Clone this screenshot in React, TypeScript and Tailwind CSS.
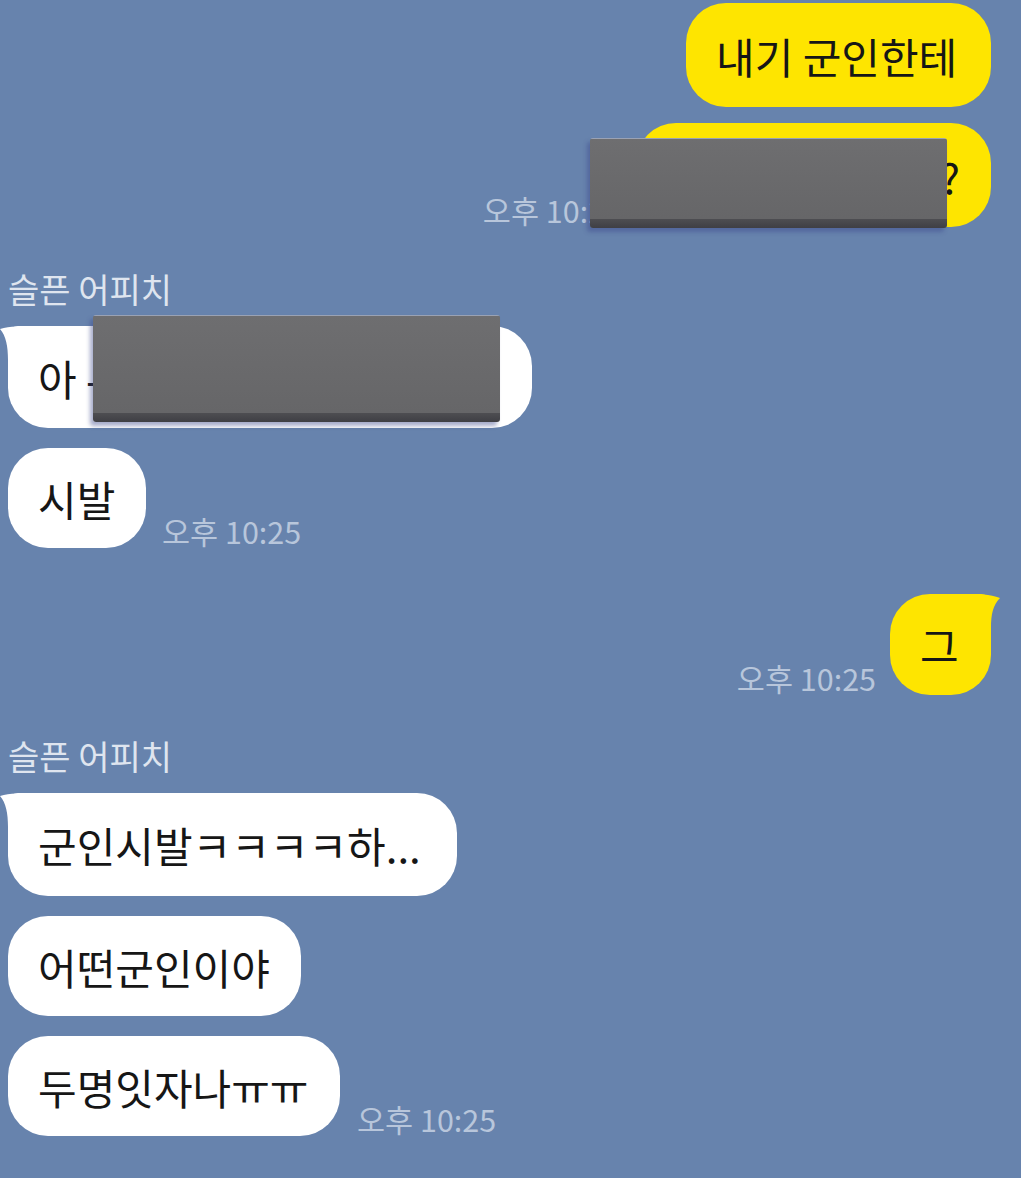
import React from "react";

const FONT = { fontFamily: '"Noto Sans CJK KR", "Noto Sans", sans-serif' };

function Time({ children }: { children: React.ReactNode }) {
  return (
    <span className="text-[30.5px] leading-[34px] text-[#b8c6db] whitespace-nowrap">
      {children}
    </span>
  );
}

function TailLeft() {
  return (
    <svg className="absolute left-[-8px] top-0" width="34" height="34" viewBox="0 0 34 34">
      <path d="M0 3 C 10 0 22 0 34 0 L34 34 L8 34 C 8 20 6 10 0 3 Z" fill="#ffffff" />
    </svg>
  );
}

function TailRight() {
  return (
    <svg className="absolute right-[-9px] top-0" width="34" height="34" viewBox="0 0 34 34">
      <path d="M34 4 C 24 0 12 0 0 0 L0 34 L25 34 C 25 20 27 11 34 4 Z" fill="#fee500" />
    </svg>
  );
}

function Bubble({
  text,
  w,
  h = 101,
  mine = false,
  tail = false,
  end = false,
}: {
  text: string;
  w: number;
  h?: number;
  mine?: boolean;
  tail?: boolean;
  end?: boolean;
}) {
  return (
    <div
      className={
        "relative flex items-center text-[42px] text-[#161616] whitespace-nowrap rounded-[40px] " +
        (end ? "justify-end pr-[31px] " : "pl-[30px] ") +
        (mine ? "bg-[#fee500] " : "bg-white ") +
        (tail && mine ? "rounded-tr-[10px] " : "") +
        (tail && !mine ? "rounded-tl-[10px] " : "")
      }
      style={{ width: w, height: h }}
    >
      {tail && (mine ? <TailRight /> : <TailLeft />)}
      <span className="relative">{text}</span>
    </div>
  );
}

function Redact({ x, y, w, h }: { x: number; y: number; w: number; h: number }) {
  return (
    <div
      className="absolute flex flex-col rounded-[3px] shadow-[-3px_4px_4px_rgba(60,70,140,0.45)] overflow-hidden"
      style={{ left: x, top: y, width: w, height: h }}
    >
      <div className="flex-1 bg-gradient-to-b from-[#6e6e70] to-[#666668] border-t border-[#9aa2b4]" />
      <div className="h-[9px] bg-gradient-to-b from-[#4e4e52] to-[#3f3f44]" />
    </div>
  );
}

export default function App() {
  return (
    <div className="relative w-[1021px] h-[1178px] bg-[#6783ad] overflow-hidden" style={FONT}>
      <div className="flex flex-col pt-[3px]">
        <div className="flex justify-end pr-[30px]">
          <Bubble text="내기 군인한테" w={305} h={104} mine />
        </div>

        <div className="flex justify-end items-end gap-[14px] pr-[30px] mt-[16px]">
          <Time>오후 10:25</Time>
          <Bubble text="?" w={355} h={104} mine end />
        </div>

        <div className="pl-[8px] mt-[42px] h-[40px] text-[34px] leading-[40px] text-[#dfe5ef]">슬픈 어피치</div>

        <div className="flex pl-[8px] mt-[17px]">
          <Bubble text="아 -" w={524} h={102} tail />
        </div>

        <div className="flex items-end gap-[16px] pl-[8px] mt-[20px]">
          <Bubble text="시발" w={138} h={100} />
          <Time>오후 10:25</Time>
        </div>

        <div className="flex justify-end items-end gap-[14px] pr-[30px] mt-[46px]">
          <Time>오후 10:25</Time>
          <Bubble text="그" w={101} h={101} mine tail />
        </div>

        <div className="pl-[8px] mt-[41px] h-[40px] text-[34px] leading-[40px] text-[#dfe5ef]">슬픈 어피치</div>

        <div className="flex pl-[8px] mt-[17px]">
          <Bubble text="군인시발ㅋㅋㅋㅋ하..." w={449} h={103} tail />
        </div>

        <div className="flex pl-[8px] mt-[20px]">
          <Bubble text="어떤군인이야" w={293} h={100} />
        </div>

        <div className="flex items-end gap-[17px] pl-[8px] mt-[20px]">
          <Bubble text="두명잇자나ㅠㅠ" w={332} h={100} />
          <Time>오후 10:25</Time>
        </div>
      </div>

      <Redact x={590} y={138} w={357} h={90} />
      <Redact x={93} y={315} w={407} h={107} />
    </div>
  );
}
